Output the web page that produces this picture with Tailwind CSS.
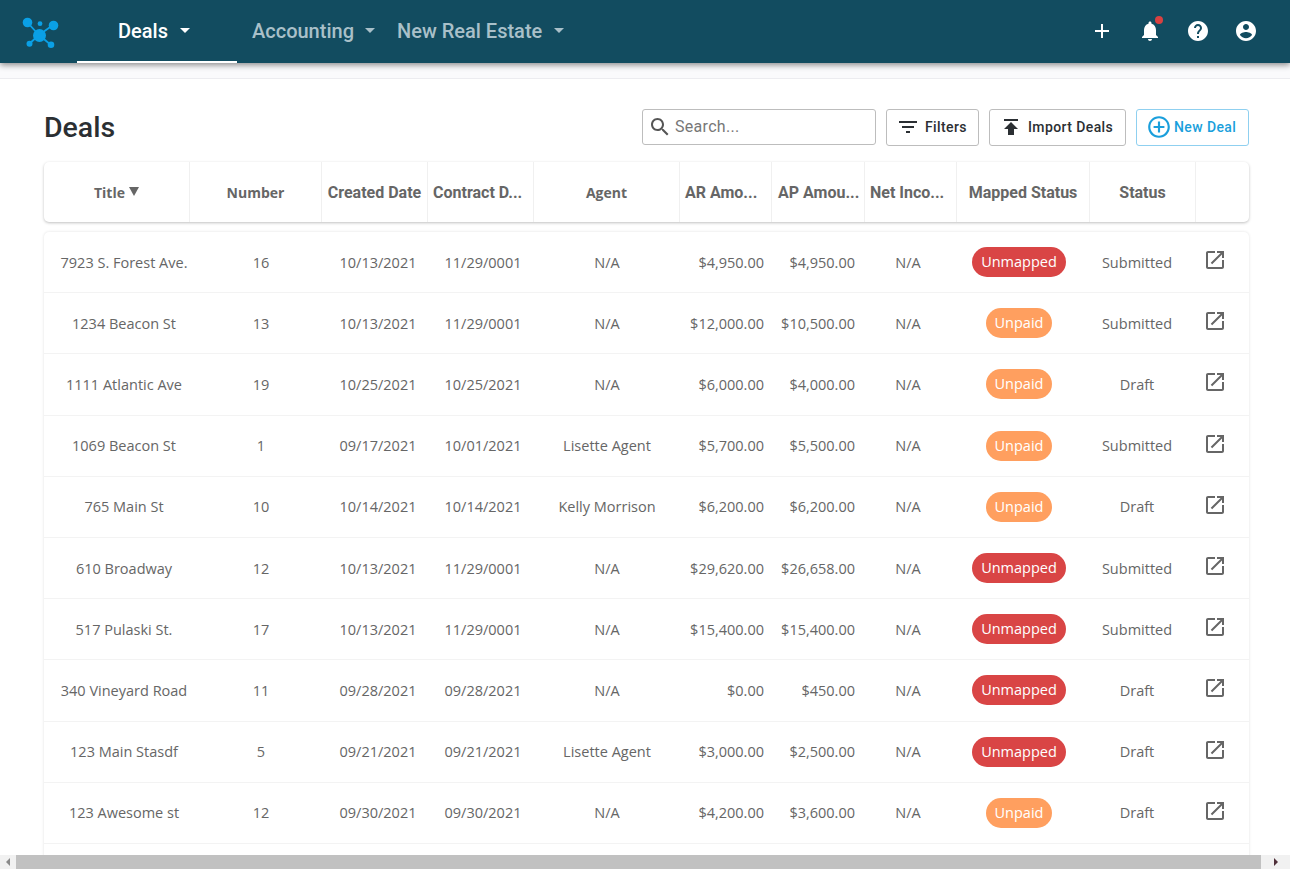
<!DOCTYPE html>
<html lang="en">

<head>
    <meta charset="UTF-8">
    <meta name="viewport" content="width=device-width, initial-scale=1.0">
    <script src="https://cdn.jsdelivr.net/npm/@tailwindcss/browser@4"></script>
    <title>Deals</title>
</head>

<body class="overflow-hidden">
    <div class="w-[1290px] h-[869px] flex flex-col bg-white font-['Open_Sans',sans-serif] overflow-hidden">

        <!-- top nav -->
        <nav class="relative z-10 h-[63px] shrink-0 bg-[#124c60] shadow-[0_2px_6px_rgba(0,0,0,0.45)] flex items-center font-['Roboto',sans-serif] font-medium text-[20px]">
            <div class="w-[77px] pl-[22px] shrink-0">
                <svg class="w-[38px] h-[32px] block" viewBox="22 14 38 32" fill="#0aa0e6">
                    <path d="M27 20 L39 33 L53 23 M39 33 L29 42 M39 33 L51 43" stroke="#0aa0e6" stroke-width="1.8" fill="none"/>
                    <circle cx="27.5" cy="20.5" r="4.8"/>
                    <circle cx="40" cy="21.7" r="2.4"/>
                    <circle cx="53.5" cy="23.5" r="4.8"/>
                    <circle cx="39.5" cy="33.5" r="6.5"/>
                    <circle cx="29.5" cy="41.7" r="3"/>
                    <circle cx="51" cy="42.7" r="3.3"/>
                </svg>
            </div>
            <div class="w-[160px] h-full flex items-center pl-[41px] text-white border-b-2 border-white shrink-0">
                Deals
                <span class="ml-[12px] w-0 h-0 border-x-[5px] border-x-transparent border-t-[5px] border-t-white"></span>
            </div>
            <div class="ml-[15px] pb-[2px] flex items-center text-[#a9c0c9]">
                Accounting
                <span class="ml-[11px] w-0 h-0 border-x-[5px] border-x-transparent border-t-[5px] border-t-[#a9c0c9]"></span>
            </div>
            <div class="ml-[22px] pb-[2px] flex items-center text-[#a9c0c9]">
                New Real Estate
                <span class="ml-[12px] w-0 h-0 border-x-[5px] border-x-transparent border-t-[5px] border-t-[#a9c0c9]"></span>
            </div>
            <div class="ml-auto pr-[32px] pb-[2px] flex items-center gap-[24px] text-white">
                <svg class="w-6 h-6" viewBox="0 0 24 24" fill="currentColor"><path d="M19 13h-6v6h-2v-6H5v-2h6V5h2v6h6v2z"/></svg>
                <div class="relative w-6 h-6">
                    <svg class="w-6 h-6" viewBox="0 0 24 24" fill="currentColor"><path d="M12 22c1.1 0 2-.9 2-2h-4c0 1.1.89 2 2 2zm6-6v-5c0-3.07-1.64-5.64-4.5-6.32V4c0-.83-.67-1.5-1.5-1.5s-1.5.67-1.5 1.5v.68C7.63 5.36 6 7.92 6 11v5l-2 2v1h16v-1l-2-2z"/></svg>
                    <span class="absolute top-[-3px] right-[-1px] w-2 h-2 rounded-full bg-[#d94141]"></span>
                </div>
                <svg class="w-6 h-6" viewBox="0 0 24 24" fill="currentColor"><path d="M12 2C6.48 2 2 6.48 2 12s4.48 10 10 10 10-4.48 10-10S17.52 2 12 2zm1 17h-2v-2h2v2zm2.07-7.75l-.9.92C13.45 12.9 13 13.5 13 15h-2v-.5c0-1.1.45-2.1 1.17-2.83l1.24-1.26c.37-.36.59-.86.59-1.41 0-1.1-.9-2-2-2s-2 .9-2 2H8c0-2.21 1.79-4 4-4s4 1.79 4 4c0 .88-.36 1.68-.93 2.25z"/></svg>
                <svg class="w-6 h-6" viewBox="0 0 24 24" fill="currentColor"><path d="M12 2C6.48 2 2 6.48 2 12s4.48 10 10 10 10-4.48 10-10S17.52 2 12 2zm0 3c1.66 0 3 1.34 3 3s-1.34 3-3 3-3-1.34-3-3 1.34-3 3-3zm0 14.2c-2.5 0-4.71-1.28-6-3.22.03-1.99 4-3.08 6-3.08 1.99 0 5.97 1.09 6 3.08-1.29 1.94-3.5 3.22-6 3.22z"/></svg>
            </div>
        </nav>

        <div class="h-[16px] shrink-0 bg-[#fafafc] border-b border-[#ececf0]"></div>

        <main class="flex-1 min-h-0 overflow-hidden pl-[44px] pr-[41px]">
            <!-- title + actions -->
            <div class="h-[83px] pt-[30px] flex items-start font-['Roboto',sans-serif]">
                <h1 class="pt-[1px] text-[28.5px] leading-[36px] font-medium text-[#2b2f33]">Deals</h1>
                <div class="ml-auto flex gap-[10px]">
                    <div class="w-[234px] h-[36px] border border-[#bdbdbd] rounded-[3px] flex items-center pl-[7px] text-[#777] text-[16px] tracking-[0.3px]">
                        <svg class="w-[20px] h-[20px] mr-[5px] text-[#555]" viewBox="2 2 20 20" fill="currentColor"><path d="M15.5 14h-.79l-.28-.27C15.41 12.59 16 11.11 16 9.5 16 5.91 13.09 3 9.5 3S3 5.91 3 9.5 5.91 16 9.5 16c1.61 0 3.09-.59 4.23-1.57l.27.28v.79l5 4.99L20.49 19l-4.99-5zm-6 0C7.01 14 5 11.99 5 9.5S7.01 5 9.5 5 14 7.01 14 9.5 11.99 14 9.5 14z"/></svg>
                        Search...
                    </div>
                    <button class="w-[93px] h-[37px] border border-[#bdbdbd] rounded-[3px] flex items-center pl-[9px] pb-[1px] text-[14px] font-medium tracking-[0.4px] text-[#2b2f33]">
                        <svg class="w-6 h-6 mr-[5px]" viewBox="0 0 24 24" fill="currentColor"><path d="M10 18h4v-2h-4v2zM3 6v2h18V6H3zm3 7h12v-2H6v2z"/></svg>
                        Filters
                    </button>
                    <button class="w-[137px] h-[37px] border border-[#bdbdbd] rounded-[3px] flex items-center pl-[9px] pb-[1px] text-[14px] font-medium tracking-[0.4px] text-[#2b2f33]">
                        <svg class="w-6 h-6 mr-[5px]" viewBox="0 0 24 24" fill="currentColor"><path d="M5 4v2h14V4H5zm0 10h4v6h6v-6h4l-7-7-7 7z"/></svg>
                        Import Deals
                    </button>
                    <button class="w-[113px] h-[37px] border border-[#8fd0f0] rounded-[3px] flex items-center pl-[9px] pb-[1px] text-[14px] font-medium tracking-[0.4px] text-[#1a9fdc]">
                        <svg class="w-[26px] h-[26px] mr-[2px]" viewBox="0 0 24 24" fill="currentColor"><path d="M13 7h-2v4H7v2h4v4h2v-4h4v-2h-4V7zm-1-5C6.48 2 2 6.48 2 12s4.48 10 10 10 10-4.48 10-10S17.52 2 12 2zm0 18c-4.41 0-8-3.59-8-8s3.59-8 8-8 8 3.59 8 8-3.59 8-8 8z"/></svg>
                        New Deal
                    </button>
                </div>
            </div>

            <!-- header table -->
            <div class="h-[60px] rounded-[5px] bg-white shadow-[0_1px_3px_rgba(0,0,0,0.25)] grid grid-cols-[146px_132px_106px_106px_146px_92px_93px_92px_133px_106px_53px] text-[14px] font-bold text-[#666]">
                <div class="flex items-center justify-center border-r border-[#f0f0f0]">Title <span class="ml-[4px] mb-[2px] w-0 h-0 border-x-[5px] border-x-transparent border-t-[9px] border-t-[#666]"></span></div>
                <div class="flex items-center justify-center border-r border-[#f0f0f0]">Number</div>
                <div class="flex items-center justify-center pt-[2px] border-r border-[#f0f0f0] text-[16px] font-['Roboto',sans-serif]">Created Date</div>
                <div class="flex items-center pl-[5px] pt-[2px] border-r border-[#f0f0f0] text-[16px] font-['Roboto',sans-serif]">Contract D...</div>
                <div class="flex items-center justify-center border-r border-[#f0f0f0]">Agent</div>
                <div class="flex items-center pl-[5px] pt-[2px] border-r border-[#f0f0f0] text-[16px] font-['Roboto',sans-serif]">AR Amo...</div>
                <div class="flex items-center pl-[6px] pt-[2px] border-r border-[#f0f0f0] text-[16px] font-['Roboto',sans-serif]">AP Amou...</div>
                <div class="flex items-center pl-[5px] pt-[2px] border-r border-[#f0f0f0] text-[16px] font-['Roboto',sans-serif]">Net Inco...</div>
                <div class="flex items-center justify-center pt-[2px] border-r border-[#f0f0f0] text-[16px] font-['Roboto',sans-serif]">Mapped Status</div>
                <div class="flex items-center justify-center pt-[2px] border-r border-[#f0f0f0] text-[16px] font-['Roboto',sans-serif]">Status</div>
                <div></div>
            </div>

            <!-- rows -->
            <div class="mt-[10px] bg-white rounded-t-[5px] shadow-[0_0_3px_rgba(0,0,0,0.12)] h-[700px] text-[14.5px] leading-[24px] text-[#666]">
                <div class="h-[61.2px] border-b border-[#f3f3f3] grid grid-cols-[160px_114px_120px_90px_158px_86px_91px_90px_132px_104px_60px] items-center text-center">
                    <div class="pt-[1px]">7923 S. Forest Ave.</div><div class="pt-[1px]">16</div><div class="pt-[1px]">10/13/2021</div><div class="pt-[1px]">11/29/0001</div><div class="pt-[1px]">N/A</div>
                    <div class="text-right pr-2 pt-[1px]">$4,950.00</div><div class="text-right pr-2 pt-[1px]">$4,950.00</div><div class="pt-[1px]">N/A</div>
                    <div><span class="inline-block h-[30px] leading-[30px] px-[9px] rounded-full bg-[#d94545] text-white">Unmapped</span></div>
                    <div class="pt-[1px]">Submitted</div>
                    <div class="pb-[4px] pl-[14px]"><svg class="w-6 h-6 block text-[#666]" viewBox="0 0 24 24" fill="currentColor"><path d="M19 19H5V5h7V3H5c-1.11 0-2 .9-2 2v14c0 1.1.89 2 2 2h14c1.1 0 2-.9 2-2v-7h-2v7zM14 3v2h3.59l-9.83 9.83 1.41 1.41L19 6.41V10h2V3h-7z"/></svg></div>
                </div>
                <div class="h-[61.2px] border-b border-[#f3f3f3] grid grid-cols-[160px_114px_120px_90px_158px_86px_91px_90px_132px_104px_60px] items-center text-center">
                    <div class="pt-[1px]">1234 Beacon St</div><div class="pt-[1px]">13</div><div class="pt-[1px]">10/13/2021</div><div class="pt-[1px]">11/29/0001</div><div class="pt-[1px]">N/A</div>
                    <div class="text-right pr-2 pt-[1px]">$12,000.00</div><div class="text-right pr-2 pt-[1px]">$10,500.00</div><div class="pt-[1px]">N/A</div>
                    <div><span class="inline-block h-[30px] leading-[30px] px-[9px] rounded-full bg-[#ff9f5f] text-white">Unpaid</span></div>
                    <div class="pt-[1px]">Submitted</div>
                    <div class="pb-[4px] pl-[14px]"><svg class="w-6 h-6 block text-[#666]" viewBox="0 0 24 24" fill="currentColor"><path d="M19 19H5V5h7V3H5c-1.11 0-2 .9-2 2v14c0 1.1.89 2 2 2h14c1.1 0 2-.9 2-2v-7h-2v7zM14 3v2h3.59l-9.83 9.83 1.41 1.41L19 6.41V10h2V3h-7z"/></svg></div>
                </div>
                <div class="h-[61.2px] border-b border-[#f3f3f3] grid grid-cols-[160px_114px_120px_90px_158px_86px_91px_90px_132px_104px_60px] items-center text-center">
                    <div class="pt-[1px]">1111 Atlantic Ave</div><div class="pt-[1px]">19</div><div class="pt-[1px]">10/25/2021</div><div class="pt-[1px]">10/25/2021</div><div class="pt-[1px]">N/A</div>
                    <div class="text-right pr-2 pt-[1px]">$6,000.00</div><div class="text-right pr-2 pt-[1px]">$4,000.00</div><div class="pt-[1px]">N/A</div>
                    <div><span class="inline-block h-[30px] leading-[30px] px-[9px] rounded-full bg-[#ff9f5f] text-white">Unpaid</span></div>
                    <div class="pt-[1px]">Draft</div>
                    <div class="pb-[4px] pl-[14px]"><svg class="w-6 h-6 block text-[#666]" viewBox="0 0 24 24" fill="currentColor"><path d="M19 19H5V5h7V3H5c-1.11 0-2 .9-2 2v14c0 1.1.89 2 2 2h14c1.1 0 2-.9 2-2v-7h-2v7zM14 3v2h3.59l-9.83 9.83 1.41 1.41L19 6.41V10h2V3h-7z"/></svg></div>
                </div>
                <div class="h-[61.2px] border-b border-[#f3f3f3] grid grid-cols-[160px_114px_120px_90px_158px_86px_91px_90px_132px_104px_60px] items-center text-center">
                    <div class="pt-[1px]">1069 Beacon St</div><div class="pt-[1px]">1</div><div class="pt-[1px]">09/17/2021</div><div class="pt-[1px]">10/01/2021</div><div class="pt-[1px]">Lisette Agent</div>
                    <div class="text-right pr-2 pt-[1px]">$5,700.00</div><div class="text-right pr-2 pt-[1px]">$5,500.00</div><div class="pt-[1px]">N/A</div>
                    <div><span class="inline-block h-[30px] leading-[30px] px-[9px] rounded-full bg-[#ff9f5f] text-white">Unpaid</span></div>
                    <div class="pt-[1px]">Submitted</div>
                    <div class="pb-[4px] pl-[14px]"><svg class="w-6 h-6 block text-[#666]" viewBox="0 0 24 24" fill="currentColor"><path d="M19 19H5V5h7V3H5c-1.11 0-2 .9-2 2v14c0 1.1.89 2 2 2h14c1.1 0 2-.9 2-2v-7h-2v7zM14 3v2h3.59l-9.83 9.83 1.41 1.41L19 6.41V10h2V3h-7z"/></svg></div>
                </div>
                <div class="h-[61.2px] border-b border-[#f3f3f3] grid grid-cols-[160px_114px_120px_90px_158px_86px_91px_90px_132px_104px_60px] items-center text-center">
                    <div class="pt-[1px]">765 Main St</div><div class="pt-[1px]">10</div><div class="pt-[1px]">10/14/2021</div><div class="pt-[1px]">10/14/2021</div><div class="pt-[1px]">Kelly Morrison</div>
                    <div class="text-right pr-2 pt-[1px]">$6,200.00</div><div class="text-right pr-2 pt-[1px]">$6,200.00</div><div class="pt-[1px]">N/A</div>
                    <div><span class="inline-block h-[30px] leading-[30px] px-[9px] rounded-full bg-[#ff9f5f] text-white">Unpaid</span></div>
                    <div class="pt-[1px]">Draft</div>
                    <div class="pb-[4px] pl-[14px]"><svg class="w-6 h-6 block text-[#666]" viewBox="0 0 24 24" fill="currentColor"><path d="M19 19H5V5h7V3H5c-1.11 0-2 .9-2 2v14c0 1.1.89 2 2 2h14c1.1 0 2-.9 2-2v-7h-2v7zM14 3v2h3.59l-9.83 9.83 1.41 1.41L19 6.41V10h2V3h-7z"/></svg></div>
                </div>
                <div class="h-[61.2px] border-b border-[#f3f3f3] grid grid-cols-[160px_114px_120px_90px_158px_86px_91px_90px_132px_104px_60px] items-center text-center">
                    <div class="pt-[1px]">610 Broadway</div><div class="pt-[1px]">12</div><div class="pt-[1px]">10/13/2021</div><div class="pt-[1px]">11/29/0001</div><div class="pt-[1px]">N/A</div>
                    <div class="text-right pr-2 pt-[1px]">$29,620.00</div><div class="text-right pr-2 pt-[1px]">$26,658.00</div><div class="pt-[1px]">N/A</div>
                    <div><span class="inline-block h-[30px] leading-[30px] px-[9px] rounded-full bg-[#d94545] text-white">Unmapped</span></div>
                    <div class="pt-[1px]">Submitted</div>
                    <div class="pb-[4px] pl-[14px]"><svg class="w-6 h-6 block text-[#666]" viewBox="0 0 24 24" fill="currentColor"><path d="M19 19H5V5h7V3H5c-1.11 0-2 .9-2 2v14c0 1.1.89 2 2 2h14c1.1 0 2-.9 2-2v-7h-2v7zM14 3v2h3.59l-9.83 9.83 1.41 1.41L19 6.41V10h2V3h-7z"/></svg></div>
                </div>
                <div class="h-[61.2px] border-b border-[#f3f3f3] grid grid-cols-[160px_114px_120px_90px_158px_86px_91px_90px_132px_104px_60px] items-center text-center">
                    <div class="pt-[1px]">517 Pulaski St.</div><div class="pt-[1px]">17</div><div class="pt-[1px]">10/13/2021</div><div class="pt-[1px]">11/29/0001</div><div class="pt-[1px]">N/A</div>
                    <div class="text-right pr-2 pt-[1px]">$15,400.00</div><div class="text-right pr-2 pt-[1px]">$15,400.00</div><div class="pt-[1px]">N/A</div>
                    <div><span class="inline-block h-[30px] leading-[30px] px-[9px] rounded-full bg-[#d94545] text-white">Unmapped</span></div>
                    <div class="pt-[1px]">Submitted</div>
                    <div class="pb-[4px] pl-[14px]"><svg class="w-6 h-6 block text-[#666]" viewBox="0 0 24 24" fill="currentColor"><path d="M19 19H5V5h7V3H5c-1.11 0-2 .9-2 2v14c0 1.1.89 2 2 2h14c1.1 0 2-.9 2-2v-7h-2v7zM14 3v2h3.59l-9.83 9.83 1.41 1.41L19 6.41V10h2V3h-7z"/></svg></div>
                </div>
                <div class="h-[61.2px] border-b border-[#f3f3f3] grid grid-cols-[160px_114px_120px_90px_158px_86px_91px_90px_132px_104px_60px] items-center text-center">
                    <div class="pt-[1px]">340 Vineyard Road</div><div class="pt-[1px]">11</div><div class="pt-[1px]">09/28/2021</div><div class="pt-[1px]">09/28/2021</div><div class="pt-[1px]">N/A</div>
                    <div class="text-right pr-2 pt-[1px]">$0.00</div><div class="text-right pr-2 pt-[1px]">$450.00</div><div class="pt-[1px]">N/A</div>
                    <div><span class="inline-block h-[30px] leading-[30px] px-[9px] rounded-full bg-[#d94545] text-white">Unmapped</span></div>
                    <div class="pt-[1px]">Draft</div>
                    <div class="pb-[4px] pl-[14px]"><svg class="w-6 h-6 block text-[#666]" viewBox="0 0 24 24" fill="currentColor"><path d="M19 19H5V5h7V3H5c-1.11 0-2 .9-2 2v14c0 1.1.89 2 2 2h14c1.1 0 2-.9 2-2v-7h-2v7zM14 3v2h3.59l-9.83 9.83 1.41 1.41L19 6.41V10h2V3h-7z"/></svg></div>
                </div>
                <div class="h-[61.2px] border-b border-[#f3f3f3] grid grid-cols-[160px_114px_120px_90px_158px_86px_91px_90px_132px_104px_60px] items-center text-center">
                    <div class="pt-[1px]">123 Main Stasdf</div><div class="pt-[1px]">5</div><div class="pt-[1px]">09/21/2021</div><div class="pt-[1px]">09/21/2021</div><div class="pt-[1px]">Lisette Agent</div>
                    <div class="text-right pr-2 pt-[1px]">$3,000.00</div><div class="text-right pr-2 pt-[1px]">$2,500.00</div><div class="pt-[1px]">N/A</div>
                    <div><span class="inline-block h-[30px] leading-[30px] px-[9px] rounded-full bg-[#d94545] text-white">Unmapped</span></div>
                    <div class="pt-[1px]">Draft</div>
                    <div class="pb-[4px] pl-[14px]"><svg class="w-6 h-6 block text-[#666]" viewBox="0 0 24 24" fill="currentColor"><path d="M19 19H5V5h7V3H5c-1.11 0-2 .9-2 2v14c0 1.1.89 2 2 2h14c1.1 0 2-.9 2-2v-7h-2v7zM14 3v2h3.59l-9.83 9.83 1.41 1.41L19 6.41V10h2V3h-7z"/></svg></div>
                </div>
                <div class="h-[61.2px] border-b border-[#f3f3f3] grid grid-cols-[160px_114px_120px_90px_158px_86px_91px_90px_132px_104px_60px] items-center text-center">
                    <div class="pt-[1px]">123 Awesome st</div><div class="pt-[1px]">12</div><div class="pt-[1px]">09/30/2021</div><div class="pt-[1px]">09/30/2021</div><div class="pt-[1px]">N/A</div>
                    <div class="text-right pr-2 pt-[1px]">$4,200.00</div><div class="text-right pr-2 pt-[1px]">$3,600.00</div><div class="pt-[1px]">N/A</div>
                    <div><span class="inline-block h-[30px] leading-[30px] px-[9px] rounded-full bg-[#ff9f5f] text-white">Unpaid</span></div>
                    <div class="pt-[1px]">Draft</div>
                    <div class="pb-[4px] pl-[14px]"><svg class="w-6 h-6 block text-[#666]" viewBox="0 0 24 24" fill="currentColor"><path d="M19 19H5V5h7V3H5c-1.11 0-2 .9-2 2v14c0 1.1.89 2 2 2h14c1.1 0 2-.9 2-2v-7h-2v7zM14 3v2h3.59l-9.83 9.83 1.41 1.41L19 6.41V10h2V3h-7z"/></svg></div>
                </div>
            </div>
        </main>

        <!-- window scrollbar -->
        <div class="h-[14px] shrink-0 bg-[#f1f1f1] flex items-center">
            <div class="w-[16px] flex justify-center"><span class="w-0 h-0 border-y-[4px] border-y-transparent border-r-[4px] border-r-[#8a8a8a]"></span></div>
            <div class="w-[1245px] h-full bg-[#c1c1c1]"></div>
            <div class="flex-1 flex justify-center"><span class="w-0 h-0 border-y-[4px] border-y-transparent border-l-[4px] border-l-[#50303a]"></span></div>
        </div>
    </div>
</body>

</html>
